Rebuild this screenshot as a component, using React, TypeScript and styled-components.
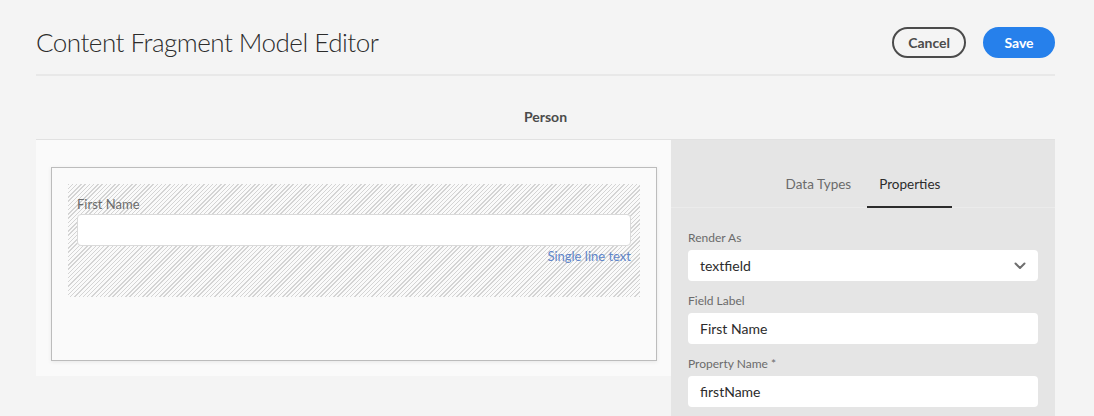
import React from "react";
import styled, { createGlobalStyle } from "styled-components";

const GlobalStyle = createGlobalStyle`
  html, body { margin: 0; padding: 0; background: #f4f4f4; }
  body { font-family: "Lato", "Open Sans", sans-serif; color: #323232; }
  * { box-sizing: border-box; }
`;

const Page = styled.div`
  padding: 0 39px 0 36px;
  min-height: 416px;
  overflow: hidden;
`;

const Header = styled.header`
  display: flex;
  align-items: center;
  justify-content: space-between;
  height: 76px;
  padding-top: 10px;
  border-bottom: 2px solid #e8e8e8;
`;

const Title = styled.h1`
  margin: 0;
  font-size: 26px;
  font-weight: 300;
  color: #2c2c2c;
  letter-spacing: -0.5px;
`;

const Actions = styled.div`
  display: flex;
  gap: 17px;
`;

const Button = styled.button<{ $primary?: boolean }>`
  height: 31px;
  min-width: ${(p) => (p.$primary ? "72px" : "70px")};
  padding: 0 14px;
  border-radius: 16px;
  font-family: inherit;
  font-size: 14px;
  font-weight: 700;
  cursor: pointer;
  border: 2px solid ${(p) => (p.$primary ? "#2680eb" : "#4b4b4b")};
  background: ${(p) => (p.$primary ? "#2680eb" : "transparent")};
  color: ${(p) => (p.$primary ? "#ffffff" : "#4b4b4b")};
`;

const ModelTitle = styled.div`
  height: 64px;
  display: flex;
  align-items: flex-end;
  justify-content: center;
  padding-bottom: 14px;
  font-size: 14px;
  font-weight: 700;
  color: #4b4b4b;
  border-bottom: 1px solid #e1e1e1;
`;

const Content = styled.div`
  display: grid;
  grid-template-columns: 635px 384px;
  align-items: start;
`;

const CanvasPanel = styled.section`
  background: #fafafa;
  height: 236px;
  padding: 27px 14px 16px 15px;
`;

const Canvas = styled.div`
  height: 194px;
  border: 1px solid #bcbcbc;
  background: #fafafa;
  box-shadow: 0 1px 4px rgba(0, 0, 0, 0.08);
  padding: 16px 16px;
`;

const FieldSlot = styled.div`
  height: 113px;
  padding: 10px 9px 0 9px;
  background-color: #fafafa;
  background-image: repeating-linear-gradient(
    135deg,
    #d4d4d4 0px,
    #d4d4d4 1px,
    transparent 1px,
    transparent 3px
  );
  display: flex;
  flex-direction: column;
`;

const SlotLabel = styled.div`
  font-size: 13px;
  line-height: 20px;
  color: #6b6b6b;
  height: 20px;
`;

const SlotInput = styled.div`
  height: 32px;
  background: #ffffff;
  border: 1px solid #dadada;
  border-radius: 4px;
`;

const SlotType = styled.div`
  text-align: right;
  font-size: 13px;
  line-height: 21px;
  color: #5f85c9;
`;

const SidePanel = styled.aside`
  background: #e5e5e5;
  min-height: 280px;
`;

const Tabs = styled.div`
  display: flex;
  justify-content: center;
  gap: 4px;
  height: 68px;
  border-bottom: 1px solid #ebebeb;
`;

const Tab = styled.div<{ $active?: boolean }>`
  display: flex;
  align-items: center;
  padding: 22px 12px 0;
  font-size: 13.5px;
  color: ${(p) => (p.$active ? "#2c2c2c" : "#6b6b6b")};
  border-bottom: 2px solid ${(p) => (p.$active ? "#2c2c2c" : "transparent")};
  margin-bottom: -1px;
`;

const Form = styled.div`
  padding: 22px 17px 0;
  display: flex;
  flex-direction: column;
`;

const Label = styled.div`
  font-size: 12px;
  line-height: 16px;
  color: #6b6b6b;
  margin: 12px 0 4px;
  &:first-child { margin-top: 0; }
`;

const Input = styled.div`
  height: 31px;
  background: #ffffff;
  border-radius: 4px;
  display: flex;
  align-items: center;
  justify-content: space-between;
  padding: 0 12px;
  font-size: 14px;
  color: #2c2c2c;
`;

const Chevron = () => (
  <svg width="12" height="8" viewBox="0 0 12 8" aria-hidden>
    <path d="M1.5 1.5 L6 6 L10.5 1.5" fill="none" stroke="#6e6e6e" strokeWidth="2" strokeLinecap="round" strokeLinejoin="round" />
  </svg>
);

export default function App() {
  return (
    <>
      <GlobalStyle />
      <Page>
        <Header>
          <Title>Content Fragment Model Editor</Title>
          <Actions>
            <Button>Cancel</Button>
            <Button $primary>Save</Button>
          </Actions>
        </Header>
        <ModelTitle>Person</ModelTitle>
        <Content>
          <CanvasPanel>
            <Canvas>
              <FieldSlot>
                <SlotLabel>First Name</SlotLabel>
                <SlotInput />
                <SlotType>Single line text</SlotType>
              </FieldSlot>
            </Canvas>
          </CanvasPanel>
          <SidePanel>
            <Tabs>
              <Tab>Data Types</Tab>
              <Tab $active>Properties</Tab>
            </Tabs>
            <Form>
              <Label>Render As</Label>
              <Input>
                textfield
                <Chevron />
              </Input>
              <Label>Field Label</Label>
              <Input>First Name</Input>
              <Label>Property Name *</Label>
              <Input>firstName</Input>
            </Form>
          </SidePanel>
        </Content>
      </Page>
    </>
  );
}
